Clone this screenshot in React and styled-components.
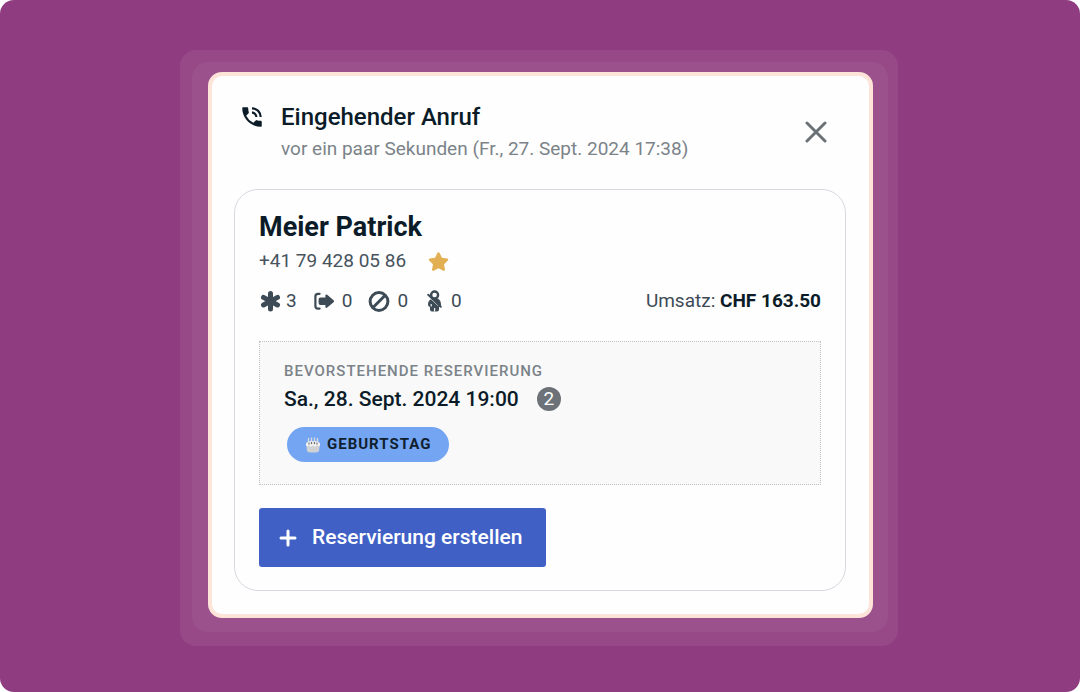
import React from 'react'
import styled, { createGlobalStyle } from 'styled-components'
import { MdPhoneInTalk } from 'react-icons/md'
import { FaStar } from 'react-icons/fa'

const CloseIcon = () => (
  <svg width="24" height="24" viewBox="0 0 24 24" fill="none" stroke="currentColor" strokeWidth="3" strokeLinecap="round" aria-hidden="true">
    <path d="M3 2L21 20M21 2L3 20" />
  </svg>
)

const PlusIcon = () => (
  <svg width="18" height="18" viewBox="0 0 18 18" fill="none" stroke="currentColor" strokeWidth="3" strokeLinecap="round" aria-hidden="true">
    <path d="M9 2V16M2 9H16" />
  </svg>
)

const AsteriskIcon = () => (
  <svg width="22" height="22" viewBox="0 0 22 22" fill="none" stroke="currentColor" strokeWidth="5" strokeLinecap="round" aria-hidden="true">
    <path d="M11.5 3.4V19M4.5 7.4L18.5 15M18.5 7.4L4.5 15" />
  </svg>
)

const WalkOutIcon = () => (
  <svg width="22" height="22" viewBox="0 0 22 22" aria-hidden="true">
    <path d="M6.6 3.8H5Q2.4 3.8 2.4 6.4V16Q2.4 18.6 5 18.6H6.6" fill="none" stroke="currentColor" strokeWidth="2.2" strokeLinecap="round" />
    <path d="M7.5 7.4H12.4V5.2Q12.8 4 14.2 4.8L20.6 10.2Q21.6 11.2 20.6 12.2L14.2 17.6Q12.8 18.4 12.4 17.2V15H7.5Q5.6 15 5.6 13V9.4Q5.6 7.4 7.5 7.4Z" fill="currentColor" />
  </svg>
)

const CancelIcon = () => (
  <svg width="22" height="22" viewBox="0 0 22 22" fill="none" stroke="currentColor" strokeWidth="3" aria-hidden="true">
    <circle cx="11" cy="11.5" r="8.9" />
    <path d="M4.8 17.7L17.2 5.3" />
  </svg>
)

const NoShowIcon = () => (
  <svg width="20" height="22" viewBox="-3 0 20 22" aria-hidden="true">
    <circle cx="7.6" cy="5" r="3.5" fill="none" stroke="currentColor" strokeWidth="2.4" />
    <path d="M4.2 9Q1 10.5 1 14.6Q1 17 3 17V19.4Q3 21.4 5 21.4H10Q12 21.4 12 19.4V17Q14 17 14 14.6Q14 10.5 11 8.4L8 8Z" fill="currentColor" />
    <path d="M3.4 8.2L11.4 15.6M7.6 18V21.4M4.2 14V16.4" stroke="#fdfdfd" strokeWidth="1.1" />
    <path d="M1.2 4.8L13.8 16.8" stroke="currentColor" strokeWidth="2" strokeLinecap="round" />
  </svg>
)

const CakeIcon = () => (
  <svg width="16" height="16" viewBox="0 0 16 16" aria-hidden="true">
    <path d="M3.5 1V5M6.5 0.5V5M9.5 0.5V5M12.5 1V5" stroke="#d9dbe2" strokeWidth="1.3" />
    <path d="M1 7Q1 4 8 4T15 7V9H1Z" fill="#eceae9" />
    <path d="M1.4 8.4H14.6L14 14Q13.6 15.6 8 15.6T2 14Z" fill="#cfd1d4" />
    <path d="M1 7.4L2.4 9.6L4 7.8L6 10L8 8L10 10L12 7.8L13.6 9.6L15 7.4V6.4H1Z" fill="#f5f4f2" />
    <path d="M4 5.6V7.6M6.6 5V7.2M9.4 5V7.2M12 5.6V7.6" stroke="#5d6068" strokeWidth="1" />
  </svg>
)

const stats = [
  { label: 'Reservierungen', value: 3, icon: <AsteriskIcon />, gap: 5 },
  { label: 'Walk-outs', value: 0, icon: <WalkOutIcon />, gap: 7 },
  { label: 'Storniert', value: 0, icon: <CancelIcon />, gap: 7 },
  { label: 'Nicht erschienen', value: 0, icon: <NoShowIcon />, gap: 7 },
]

const App = () => {
  return (
    <>
      <GlobalStyle />
      <Page>
        <OuterHalo>
          <InnerHalo>
            <Card>
              <Header>
                <PhoneIcon size={26} />
                <HeaderText>
                  <Title>Eingehender Anruf</Title>
                  <Time>vor ein paar Sekunden (Fr., 27. Sept. 2024 17:38)</Time>
                </HeaderText>
                <CloseButton type="button" aria-label="Schliessen">
                  <CloseIcon />
                </CloseButton>
              </Header>
              <Guest>
                <Name>Meier Patrick</Name>
                <Phone>
                  +41 79 428 05 86
                  <FaStar size={21} color="#e2b052" />
                </Phone>
                <StatsRow>
                  <Stats>
                    {stats.map((stat) => (
                      <Stat key={stat.label} title={stat.label} $gap={stat.gap}>
                        {stat.icon}
                        {stat.value}
                      </Stat>
                    ))}
                  </Stats>
                  <Revenue>
                    Umsatz: <strong>CHF 163.50</strong>
                  </Revenue>
                </StatsRow>
                <Reservation>
                  <Caption>BEVORSTEHENDE RESERVIERUNG</Caption>
                  <ReservationDate>
                    Sa., 28. Sept. 2024 19:00
                    <Persons>2</Persons>
                  </ReservationDate>
                  <Tag>
                    <CakeIcon />
                    GEBURTSTAG
                  </Tag>
                </Reservation>
                <CreateButton type="button">
                  <PlusIcon />
                  Reservierung erstellen
                </CreateButton>
              </Guest>
            </Card>
          </InnerHalo>
        </OuterHalo>
      </Page>
    </>
  )
}

const GlobalStyle = createGlobalStyle`
  * {
    box-sizing: border-box;
  }
  body {
    margin: 0;
    background-color: #ffffff;
    font-family: Roboto, sans-serif;
  }
  h1, h2, h3, p, ul {
    margin: 0;
    padding: 0;
  }
  svg {
    flex-shrink: 0;
  }
`

const Page = styled.main`
  min-height: 100vh;
  display: flex;
  justify-content: center;
  align-items: center;
  padding: 50px 24px 46px 22px;
  border-radius: 14px;
  background-color: #903c80;
`

const OuterHalo = styled.div`
  width: 100%;
  max-width: 718px;
  padding: 12px 10px 14px 12px;
  border-radius: 16px;
  background-color: #974987;
`

const InnerHalo = styled.div`
  padding: 10px 15px 14px 16px;
  border-radius: 16px;
  background-color: #9b528c;
`

const Card = styled.section`
  padding: 25px 23px 23px 22px;
  border: 4px solid #fde3d8;
  border-radius: 14px;
  background-color: #fefefe;
`

const Header = styled.header`
  display: flex;
  align-items: flex-start;
  padding: 0 18px 0 5px;
  margin-bottom: 24px;
  color: #0b1c28;
`

const PhoneIcon = styled(MdPhoneInTalk)`
  margin: 3px 16px 0 0;
`

const HeaderText = styled.div`
  flex: 1;
`

const Title = styled.h1`
  font-size: 24px;
  line-height: 32px;
  font-weight: 500;
`

const Time = styled.p`
  font-size: 19px;
  line-height: 32px;
  color: #7b8389;
`

const CloseButton = styled.button`
  display: flex;
  align-self: center;
  padding: 0;
  border: none;
  background: none;
  color: #6a7278;
  cursor: pointer;
`

const Guest = styled.div`
  padding: 21px 24px 23px;
  border: 1px solid #d6d9e0;
  border-radius: 24px;
`

const Name = styled.h2`
  font-size: 27px;
  line-height: 32px;
  font-weight: 700;
  color: #0b1c28;
`

const Phone = styled.p`
  display: flex;
  align-items: center;
  gap: 22px;
  font-size: 19px;
  line-height: 36px;
  color: #47535d;
`

const StatsRow = styled.div`
  display: flex;
  justify-content: space-between;
  margin-bottom: 18px;
  font-size: 19px;
  line-height: 44px;
  color: #3d4b56;
`

const Stats = styled.ul`
  display: flex;
  gap: 16px;
  list-style: none;
`

const Stat = styled.li`
  display: flex;
  align-items: center;
  gap: ${(props) => props.$gap}px;
`

const Revenue = styled.p`
  strong {
    font-weight: 700;
    color: #0b1c28;
  }
`

const Reservation = styled.div`
  padding: 19px 24px 22px;
  margin-bottom: 23px;
  border: 1px dotted #bfc3c9;
  background-color: #f9f9f9;
`

const Caption = styled.h3`
  font-size: 15px;
  line-height: 20px;
  font-weight: 500;
  letter-spacing: 1px;
  color: #7b8389;
`

const ReservationDate = styled.p`
  display: flex;
  align-items: center;
  gap: 18px;
  font-size: 21px;
  line-height: 36px;
  font-weight: 500;
  color: #0b1c28;
`

const Persons = styled.span`
  width: 24px;
  border-radius: 12px;
  background-color: #6c7278;
  font-size: 19px;
  line-height: 24px;
  font-weight: 400;
  text-align: center;
  color: #ffffff;
`

const Tag = styled.span`
  display: flex;
  width: fit-content;
  align-items: center;
  gap: 6px;
  padding: 0 18px;
  margin: 10px 0 0 3px;
  border-radius: 18px;
  background-color: #73a5f2;
  font-size: 15px;
  line-height: 35px;
  font-weight: 700;
  letter-spacing: 1px;
  color: #10202f;
`

const CreateButton = styled.button`
  display: flex;
  align-items: center;
  gap: 15px;
  padding: 0 24px 0 20px;
  border: none;
  border-radius: 3px;
  background-color: #4060c6;
  font-family: inherit;
  font-size: 21px;
  line-height: 59px;
  font-weight: 500;
  color: #ffffff;
  cursor: pointer;
`

export default App
